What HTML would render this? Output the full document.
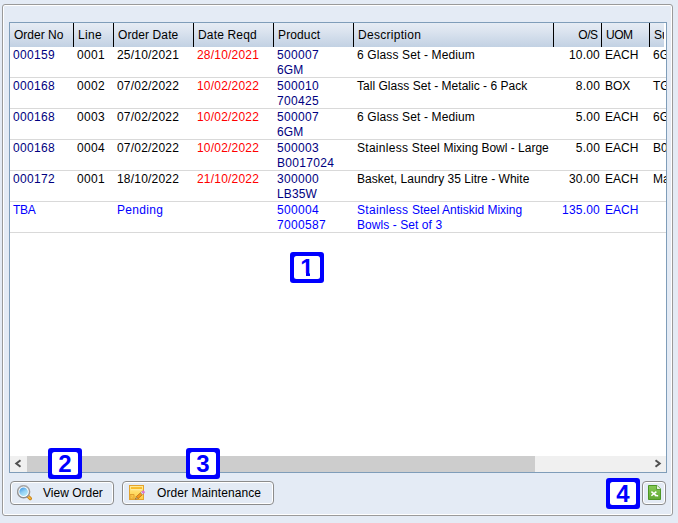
<!DOCTYPE html>
<html lang="en"><head><meta charset="utf-8"><title>Outstanding Orders</title>
<style>
html,body{margin:0;padding:0;}
body{width:678px;height:523px;overflow:hidden;background:#e4ebf5;position:relative;font-family:"Liberation Sans",Arial,sans-serif;font-size:12px;color:#000;}
.panel{position:absolute;left:2px;top:4px;width:669px;height:510px;border:1px solid #9a9a9a;border-radius:3px;box-shadow:inset 0 0 0 1px #fff;background:#e4ebf5;}
.grid{position:absolute;left:9px;top:22px;width:656px;height:449px;border:1px solid #7f9db9;background:#fff;overflow:hidden;}
.hdr{position:absolute;left:0;top:0;width:654px;height:24px;overflow:hidden;background:linear-gradient(#e6ecf4 0%,#dde5f0 30%,#c2d1e3 100%);}
.hc{position:absolute;top:0;height:24px;box-sizing:border-box;border-right:1px solid #000;line-height:24px;padding:0 3px 0 4px;white-space:nowrap;overflow:hidden;}
.hc.r{text-align:right;}
.row{position:absolute;left:0;width:656px;height:30px;border-bottom:1px solid #d9d9d9;}
.c{position:absolute;top:0;height:30px;box-sizing:border-box;line-height:15px;padding:1px 2px 0 3px;white-space:nowrap;overflow:hidden;}
.c.r{text-align:right;}
.nv{color:#000080;}.rd{color:#ff0000;}.bk{color:#000;}.bl{color:#0000ff;}
.sb{position:absolute;left:0;top:433px;width:656px;height:16px;background:#f0f0f0;}
.thumb{position:absolute;left:17px;top:0;width:508px;height:16px;background:#cdcdcd;}
.btn{position:absolute;top:481px;height:22px;border:1px solid #8c8c8c;border-radius:4px;box-shadow:inset 0 0 0 1px #fff;background:#e4ebf5;line-height:22px;white-space:nowrap;}
.btn span{position:absolute;top:0;}
.call{position:absolute;width:34px;height:31px;background:#0000ff;border-radius:3px;}
.call i{position:absolute;top:21px;height:3px;background:#fff;}
.call b{position:absolute;left:4px;top:4px;width:26px;height:23px;background:#fff;border-radius:2.5px;color:#0000ff;font:bold 24px/23px "Liberation Sans",Arial,sans-serif;text-align:center;}
svg{display:block;}
</style></head><body>
<div class="panel"></div>
<div class="grid">
<div class="hdr">
<div class="hc" style="left:0px;width:64px">Order No</div>
<div class="hc" style="left:64px;width:40px"><span style="letter-spacing:0.3px">Line</span></div>
<div class="hc" style="left:104px;width:80px"><span style="letter-spacing:0.1px">Order Date</span></div>
<div class="hc" style="left:184px;width:80px"><span style="letter-spacing:0.17px">Date Reqd</span></div>
<div class="hc" style="left:264px;width:80px"><span style="letter-spacing:0.13px">Product</span></div>
<div class="hc" style="left:344px;width:200px"><span style="letter-spacing:0.28px">Description</span></div>
<div class="hc r" style="left:544px;width:48px"><span style="letter-spacing:-0.5px;margin-right:0.5px">O/S</span></div>
<div class="hc" style="left:592px;width:48px"><span style="letter-spacing:-0.5px">UOM</span></div>
<div class="hc" style="left:640px;width:48px">Supplier</div>
</div>
<div class="row" style="top:24px">
<div class="c nv" style="left:0px;width:64px"><span style="letter-spacing:0.33px">000159</span></div>
<div class="c bk" style="left:64px;width:40px"><span style="letter-spacing:0.33px">0001</span></div>
<div class="c bk" style="left:104px;width:80px"><span style="letter-spacing:0.2px">25/10/2021</span></div>
<div class="c rd" style="left:184px;width:80px"><span style="letter-spacing:0.2px">28/10/2021</span></div>
<div class="c nv" style="left:264px;width:80px"><span style="letter-spacing:0.33px">500007</span><br><span style="letter-spacing:0.1px">6GM</span></div>
<div class="c bk" style="left:344px;width:200px"><span style="letter-spacing:0.13px">6 Glass Set - Medium</span></div>
<div class="c bk r" style="left:544px;width:48px"><span style="letter-spacing:0.2px">10.00</span></div>
<div class="c bk" style="left:592px;width:48px">EACH</div>
<div class="c bk" style="left:640px;width:48px">6GM</div>
</div>
<div class="row" style="top:55px">
<div class="c nv" style="left:0px;width:64px"><span style="letter-spacing:0.33px">000168</span></div>
<div class="c bk" style="left:64px;width:40px"><span style="letter-spacing:0.33px">0002</span></div>
<div class="c bk" style="left:104px;width:80px"><span style="letter-spacing:0.2px">07/02/2022</span></div>
<div class="c rd" style="left:184px;width:80px"><span style="letter-spacing:0.2px">10/02/2022</span></div>
<div class="c nv" style="left:264px;width:80px"><span style="letter-spacing:0.33px">500010</span><br><span style="letter-spacing:0.33px">700425</span></div>
<div class="c bk" style="left:344px;width:200px"><span style="letter-spacing:0.03px">Tall Glass Set - Metalic - 6 Pack</span></div>
<div class="c bk r" style="left:544px;width:48px"><span style="letter-spacing:0.2px">8.00</span></div>
<div class="c bk" style="left:592px;width:48px">BOX</div>
<div class="c bk" style="left:640px;width:48px">TGS</div>
</div>
<div class="row" style="top:86px">
<div class="c nv" style="left:0px;width:64px"><span style="letter-spacing:0.33px">000168</span></div>
<div class="c bk" style="left:64px;width:40px"><span style="letter-spacing:0.33px">0003</span></div>
<div class="c bk" style="left:104px;width:80px"><span style="letter-spacing:0.2px">07/02/2022</span></div>
<div class="c rd" style="left:184px;width:80px"><span style="letter-spacing:0.2px">10/02/2022</span></div>
<div class="c nv" style="left:264px;width:80px"><span style="letter-spacing:0.33px">500007</span><br><span style="letter-spacing:0.1px">6GM</span></div>
<div class="c bk" style="left:344px;width:200px"><span style="letter-spacing:0.13px">6 Glass Set - Medium</span></div>
<div class="c bk r" style="left:544px;width:48px"><span style="letter-spacing:0.2px">5.00</span></div>
<div class="c bk" style="left:592px;width:48px">EACH</div>
<div class="c bk" style="left:640px;width:48px">6GM</div>
</div>
<div class="row" style="top:117px">
<div class="c nv" style="left:0px;width:64px"><span style="letter-spacing:0.33px">000168</span></div>
<div class="c bk" style="left:64px;width:40px"><span style="letter-spacing:0.33px">0004</span></div>
<div class="c bk" style="left:104px;width:80px"><span style="letter-spacing:0.2px">07/02/2022</span></div>
<div class="c rd" style="left:184px;width:80px"><span style="letter-spacing:0.2px">10/02/2022</span></div>
<div class="c nv" style="left:264px;width:80px"><span style="letter-spacing:0.33px">500003</span><br><span style="letter-spacing:0.3px">B0017024</span></div>
<div class="c bk" style="left:344px;width:200px"><span style="letter-spacing:0.28px">Stainless </span><span style="letter-spacing:0.15px">Steel </span>Mixing Bowl - Large</div>
<div class="c bk r" style="left:544px;width:48px"><span style="letter-spacing:0.2px">5.00</span></div>
<div class="c bk" style="left:592px;width:48px">EACH</div>
<div class="c bk" style="left:640px;width:48px">B0017</div>
</div>
<div class="row" style="top:148px">
<div class="c nv" style="left:0px;width:64px"><span style="letter-spacing:0.33px">000172</span></div>
<div class="c bk" style="left:64px;width:40px"><span style="letter-spacing:0.33px">0001</span></div>
<div class="c bk" style="left:104px;width:80px"><span style="letter-spacing:0.2px">18/10/2022</span></div>
<div class="c rd" style="left:184px;width:80px"><span style="letter-spacing:0.2px">21/10/2022</span></div>
<div class="c nv" style="left:264px;width:80px"><span style="letter-spacing:0.33px">300000</span><br><span style="letter-spacing:0.1px">LB35W</span></div>
<div class="c bk" style="left:344px;width:200px"><span style="letter-spacing:0.03px">Basket, Laundry 35 Litre - White</span></div>
<div class="c bk r" style="left:544px;width:48px"><span style="letter-spacing:0.2px">30.00</span></div>
<div class="c bk" style="left:592px;width:48px">EACH</div>
<div class="c bk" style="left:640px;width:48px">Matt</div>
</div>
<div class="row" style="top:179px">
<div class="c bl" style="left:0px;width:64px"><span style="letter-spacing:-0.3px">TBA</span></div>
<div class="c bl" style="left:104px;width:80px"><span style="letter-spacing:0.33px">Pending</span></div>
<div class="c bl" style="left:264px;width:80px"><span style="letter-spacing:0.33px">500004</span><br><span style="letter-spacing:0.33px">7000587</span></div>
<div class="c bl" style="left:344px;width:200px"><span style="letter-spacing:0.3px">Stainless </span>Steel Antiskid Mixing<br><span style="letter-spacing:0.07px">Bowls - Set of 3</span></div>
<div class="c bl r" style="left:544px;width:48px"><span style="letter-spacing:0.2px">135.00</span></div>
<div class="c bl" style="left:592px;width:48px">EACH</div>
</div>
<div class="sb"><div class="thumb"></div>
<svg style="position:absolute;left:4px;top:3px" width="9" height="10" viewBox="0 0 9 10"><path d="M6.5 1.3 L2.3 4.5 L6.5 7.7" fill="none" stroke="#505050" stroke-width="2"/></svg>
<svg style="position:absolute;left:643px;top:3px" width="9" height="10" viewBox="0 0 9 10"><path d="M2.5 1.3 L6.7 4.5 L2.5 7.7" fill="none" stroke="#505050" stroke-width="2"/></svg>
</div>
</div>
<div class="btn" style="left:10px;width:102px">
<svg style="position:absolute;left:6px;top:3px" width="17" height="17" viewBox="0 0 17 17">
<defs><linearGradient id="gl" x1="0.2" y1="0" x2="0.8" y2="1"><stop offset="0" stop-color="#3c96e4"/><stop offset="0.5" stop-color="#93d0f3"/><stop offset="1" stop-color="#b8eef9"/></linearGradient>
<linearGradient id="rg" x1="0" y1="0" x2="0" y2="1"><stop offset="0" stop-color="#a8a8a8"/><stop offset="1" stop-color="#8c8c8c"/></linearGradient></defs>
<path d="M10.6 10.9 L13.3 13.5" stroke="#c8861a" stroke-width="3.4" stroke-linecap="round"/>
<path d="M11.6 11.9 L13.2 13.4" stroke="#fbb73c" stroke-width="1.5" stroke-linecap="round"/>
<path d="M10.2 10.4 L11.2 11.4" stroke="#d8dde4" stroke-width="2.2"/>
<circle cx="6.6" cy="6.7" r="6.0" fill="#fff" stroke="url(#rg)" stroke-width="1.5"/>
<circle cx="6.6" cy="6.7" r="4.3" fill="url(#gl)"/>
</svg>
<span style="left:32px">View Order</span></div>
<div class="btn" style="left:122px;width:150px">
<svg style="position:absolute;left:6px;top:3px" width="18" height="17" viewBox="0 0 18 17">
<defs><linearGradient id="nt" x1="0" y1="0" x2="0" y2="1"><stop offset="0" stop-color="#ffeb9c"/><stop offset="0.5" stop-color="#ffdc66"/><stop offset="1" stop-color="#ffcd45"/></linearGradient></defs>
<rect x="0.5" y="0.5" width="14" height="14" fill="url(#nt)" stroke="#e3a32e" stroke-width="1"/>
<rect x="2" y="2.1" width="11" height="2" fill="#f9bb2a"/>
<rect x="2" y="4.4" width="11" height="0.7" fill="#fff2b8"/>
<path d="M1 9.5 H5 V14 H1 Z" fill="#fbc94a" stroke="#e0a030" stroke-width="1"/>
<path d="M1.6 10.2 L4.4 13.8" stroke="#e8b040" stroke-width="0.8"/>
<polygon points="6.40,14.30 9.08,13.67 7.25,11.68" fill="#f3d9a8" stroke="#8a5a20" stroke-width="0.4"/>
<polygon points="6.40,14.30 7.63,14.01 6.79,13.10" fill="#333"/>
<polygon points="9.08,13.67 13.51,9.60 11.68,7.61 7.25,11.68" fill="#f7981d" stroke="#9c5a12" stroke-width="0.6"/>
<polygon points="13.51,9.60 14.47,8.72 12.64,6.73 11.68,7.61" fill="#e4eaf2" stroke="#8c96a8" stroke-width="0.4"/>
<polygon points="14.47,8.72 15.65,7.63 15.56,6.80 14.64,5.80 13.82,5.64 12.64,6.73" fill="#e46fd6" stroke="#c060b8" stroke-width="0.3"/>
</svg>
<span style="left:34px;letter-spacing:0.08px">Order Maintenance</span></div>
<div class="btn" style="left:642px;width:22px">
<svg style="position:absolute;left:5px;top:3px" width="14" height="16" viewBox="0 0 14 16">
<defs><linearGradient id="xg" x1="0" y1="0" x2="0" y2="1"><stop offset="0" stop-color="#86c955"/><stop offset="1" stop-color="#63a934"/></linearGradient></defs>
<path d="M0.5 0.5 H9 L12.5 4 V14.5 H0.5 Z" fill="url(#xg)" stroke="#4d9624" stroke-width="1"/>
<path d="M8.9 0.9 V4.1 H12.1 Z" fill="#fff" stroke="#fff" stroke-width="0.5" stroke-linejoin="round"/>
<path d="M8.6 0.8 V4.4 H12.3" fill="none" stroke="#3f8a1c" stroke-width="0.8"/>
<path d="M3.4 6.6 L8.6 10.8 M8.4 6.6 L3.4 10.8" stroke="#fff" stroke-width="1.5"/>
<path d="M6.8 10.6 H9.6 V11.6" stroke="#fff" stroke-width="1.1" fill="none"/>
</svg></div>
<div class="call" style="left:290px;top:252px"><b>1</b><i style="left:11px;width:5px"></i><i style="left:20px;width:6px"></i></div>
<div class="call" style="left:48px;top:448px"><b>2</b></div>
<div class="call" style="left:186px;top:448px"><b>3</b></div>
<div class="call" style="left:606px;top:478px"><b>4</b></div>
</body></html>
